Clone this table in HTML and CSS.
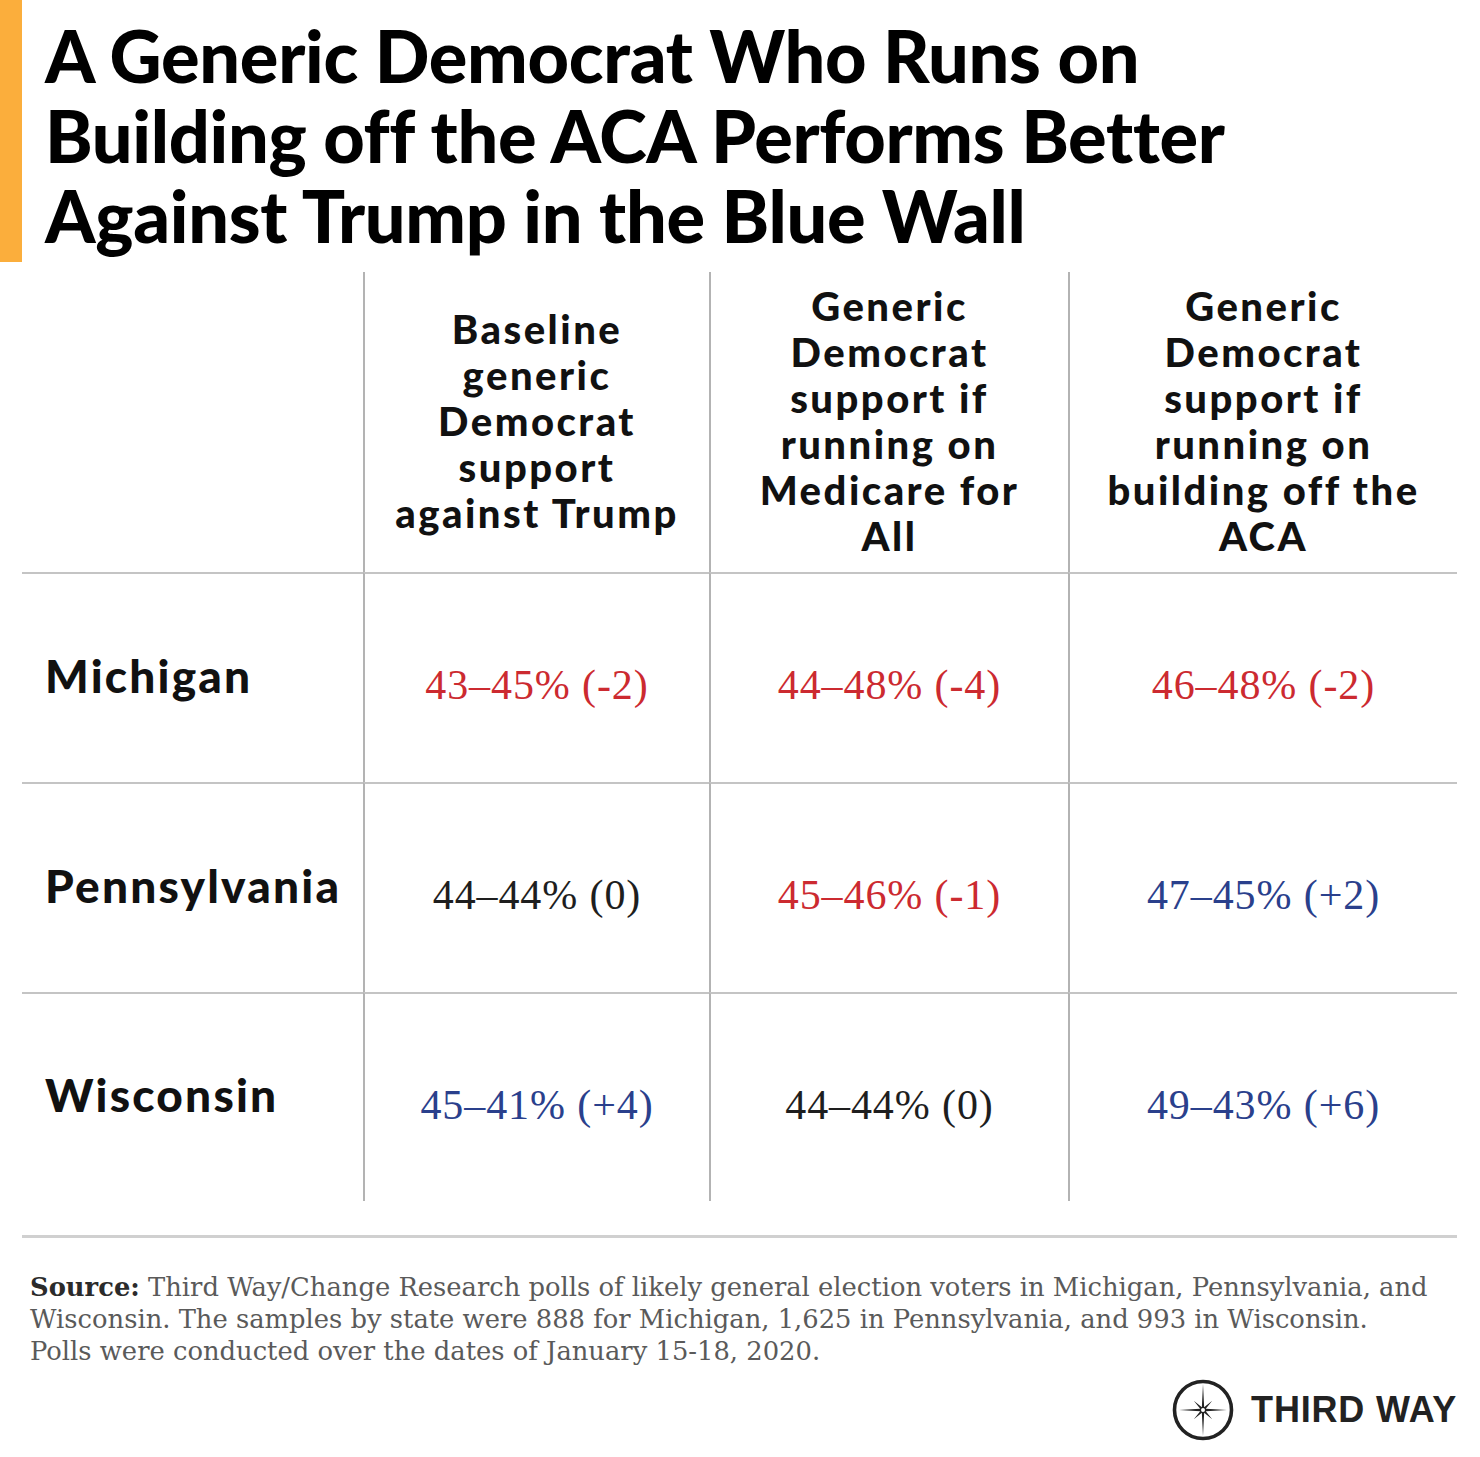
FILE: index.html
```html
<!DOCTYPE html>
<html lang="en">
<head>
<meta charset="utf-8">
<title>A Generic Democrat Who Runs on Building off the ACA</title>
<link rel="stylesheet" href="styles.css">
</head>
<body>
<div class="page">
  <header class="title-block">
    <h1 class="title">A Generic Democrat Who Runs on<br>Building off the ACA Performs Better<br>Against Trump in the Blue Wall</h1>
  </header>

  <div class="table">
    <div class="cell head corner"></div>
    <div class="cell head col"><span>Baseline<br>generic<br>Democrat<br>support<br>against Trump</span></div>
    <div class="cell head col"><span>Generic<br>Democrat<br>support if<br>running on<br>Medicare for<br>All</span></div>
    <div class="cell head col"><span>Generic<br>Democrat<br>support if<br>running on<br>building off the<br>ACA</span></div>

    <div class="cell label row">Michigan</div>
    <div class="cell data row col red">43–45% (-2)</div>
    <div class="cell data row col red">44–48% (-4)</div>
    <div class="cell data row col red">46–48% (-2)</div>

    <div class="cell label row">Pennsylvania</div>
    <div class="cell data row col neutral">44–44% (0)</div>
    <div class="cell data row col red">45–46% (-1)</div>
    <div class="cell data row col blue">47–45% (+2)</div>

    <div class="cell label row">Wisconsin</div>
    <div class="cell data row col blue">45–41% (+4)</div>
    <div class="cell data row col neutral">44–44% (0)</div>
    <div class="cell data row col blue">49–43% (+6)</div>
  </div>

  <hr class="rule">

  <p class="source"><strong>Source:</strong> Third Way/Change Research polls of likely general election voters in Michigan, Pennsylvania, and<br>Wisconsin. The samples by state were 888 for Michigan, 1,625 in Pennsylvania, and 993 in Wisconsin.<br>Polls were conducted over the dates of January 15-18, 2020.</p>

  <footer class="brand">
    <svg class="brand-mark" width="64" height="64" viewBox="0 0 64 64" aria-hidden="true">
      <circle cx="32" cy="32" r="28.5" fill="none" stroke="#222" stroke-width="3.6"/>
      <polygon fill="#222" points="32,6 33.15,29.23 41.19,22.81 34.77,30.85 56,32 34.77,33.15 41.19,41.19 33.15,34.77 32,58 30.85,34.77 22.81,41.19 29.23,33.15 8,32 29.23,30.85 22.81,22.81 30.85,29.23"/>
      <circle cx="32" cy="32" r="2.6" fill="#fff" stroke="#222" stroke-width="1.2"/>
    </svg>
    <span class="brand-name">THIRD WAY</span>
  </footer>
</div>
</body>
</html>
```

FILE: styles.css
```css
* { box-sizing: border-box; }

html, body {
  margin: 0;
  padding: 0;
  background: #ffffff;
}

.page {
  width: 1480px;
  height: 1457px;
  overflow: hidden;
  background: #ffffff;
}

.title-block {
  border-left: 22px solid #fbae3c;
  height: 262px;
  padding: 15px 0 0 23px;
}

.title {
  margin: 0;
  font-family: "Lato", "Liberation Sans", sans-serif;
  font-weight: 900;
  font-size: 72px;
  line-height: 80px;
  letter-spacing: -0.3px;
  color: #000;
}

.table {
  margin: 10px 23px 0 22px;
  display: grid;
  grid-template-columns: 341px 346px 359px 389px;
  grid-template-rows: 300px 210px 210px 209px;
}

.cell {
  display: flex;
  align-items: center;
}

.col {
  border-left: 2px solid #b3b3b3;
  justify-content: center;
  text-align: center;
}

.row {
  border-top: 2px solid #c4c4c4;
}

.head {
  font-family: "Lato", "Liberation Sans", sans-serif;
  font-weight: 900;
  font-size: 40px;
  line-height: 46px;
  letter-spacing: 2.5px;
  color: #111;
  padding-bottom: 2px;
}

.label {
  font-family: "Lato", "Liberation Sans", sans-serif;
  font-weight: 900;
  font-size: 46px;
  letter-spacing: 2.2px;
  color: #111;
  padding: 0 0 6px 23px;
}

.data {
  font-family: "Liberation Serif", "DejaVu Serif", serif;
  font-size: 42px;
  letter-spacing: 0.9px;
  padding-top: 14px;
}

.red { color: #cc2a30; }
.blue { color: #2a408c; }
.neutral { color: #1e1e1e; }

.rule {
  margin: 34px 23px 0 22px;
  border: 0;
  height: 3px;
  background: #d0d0d0;
}

.source {
  margin: 33px 0 0 30px;
  font-family: "DejaVu Serif", "Liberation Serif", serif;
  font-size: 25.8px;
  line-height: 32px;
  color: #5a5a5a;
}

.source strong {
  color: #2b2b2b;
}

.brand {
  display: flex;
  align-items: center;
  justify-content: flex-end;
  gap: 16px;
  margin: 11px 23px 0 0;
}

.brand-mark {
  display: block;
}

.brand-name {
  font-family: "Liberation Sans", "Arial", sans-serif;
  font-weight: 700;
  font-size: 36px;
  letter-spacing: 0.8px;
  color: #222;
}
```
